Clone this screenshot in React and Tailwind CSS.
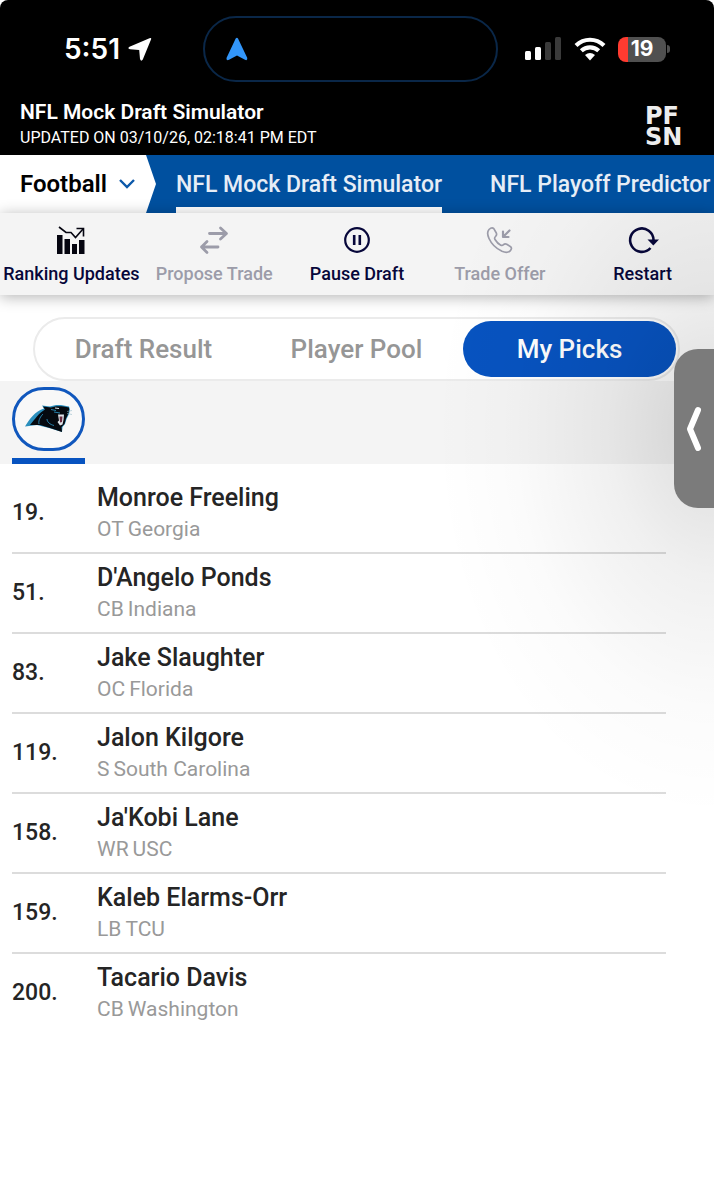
const PICKS = [
  { pick: 19, name: 'Monroe Freeling', pos: 'OT', school: 'Georgia' },
  { pick: 51, name: "D'Angelo Ponds", pos: 'CB', school: 'Indiana' },
  { pick: 83, name: 'Jake Slaughter', pos: 'OC', school: 'Florida' },
  { pick: 119, name: 'Jalon Kilgore', pos: 'S', school: 'South Carolina' },
  { pick: 158, name: "Ja'Kobi Lane", pos: 'WR', school: 'USC' },
  { pick: 159, name: 'Kaleb Elarms-Orr', pos: 'LB', school: 'TCU' },
  { pick: 200, name: 'Tacario Davis', pos: 'CB', school: 'Washington' },
];

function RankingIcon() {
  return (
    <svg width="30" height="30" viewBox="0 0 30 30" fill="none" stroke="#050510">
      <path d="M3 2l7 5.500h5l4.500 5L27 4" strokeWidth="1.600" />
      <path d="M20.500 3.500h7v8" strokeWidth="1.600" />
      <path d="M1 10h5.500v19H1zM8.500 14H14v15H8.500zM16 19h5v10h-5zM23 15h5.500v14H23z" fill="#050510" stroke="none" />
    </svg>
  );
}

function TradeIcon() {
  return (
    <svg width="30" height="30" viewBox="0 0 30 30" fill="none" stroke="currentColor" strokeWidth="2.800" strokeLinecap="round" strokeLinejoin="round">
      <path d="M10.500 8.500H27M21.500 3L27.500 8.500L21.500 14M19 22H2.500M8 16.500L2.500 22L8 27.500" />
    </svg>
  );
}

function PauseIcon() {
  return (
    <svg width="30" height="30" viewBox="0 0 30 30" fill="none" stroke="currentColor">
      <circle cx="15" cy="15" r="11.800" strokeWidth="2.200" />
      <path d="M12.200 10v10M17.800 10v10" strokeWidth="2.600" />
    </svg>
  );
}

function CallIcon() {
  return (
    <svg width="30" height="30" viewBox="0 0 30 30" fill="none" stroke="currentColor" strokeWidth="1.700" strokeLinejoin="round" strokeLinecap="round">
      <path d="M4 4.500C5.500 3 7.500 2.300 8.800 3.600L11.300 8C12 9.500 11.500 10.500 10.500 11.500C9.300 12.700 9.400 13.500 10 14.500C11.500 17 13.500 19 15.800 20.200C17 20.800 17.700 20.500 18.500 19.700C19.500 18.700 20.500 18.500 21.700 19.200L25.600 21.700C27 22.700 26.500 24.500 25.200 25.800C23 28 20 27.600 17 26.300C11 23.500 6.500 19 4 13.500C2.500 10.200 2 6.800 4 4.500Z" />
      <path d="M24.500 5.500L18.500 11.500M18 6.500V12H23.500" strokeWidth="2.200" />
    </svg>
  );
}

function RestartIcon() {
  return (
    <svg width="32" height="30" viewBox="0 0 32 30" fill="none" stroke="currentColor" strokeWidth="2.600">
      <path d="M23.500 23A11.700 11.700 0 1 1 26.500 15" />
      <path d="M20.500 14.500h11.500l-5.700 6z" fill="currentColor" stroke="none" />
    </svg>
  );
}

function PantherLogo() {
  return (
    <svg width="50" height="30" viewBox="0 0 50 30" aria-label="Carolina Panthers" role="img">
      <path d="M1 22.500C5 16 11 7 20 4.500L18 1.500L26 2.500C31 .2 38 .5 45 2.500L46 5.500L45 10L42.500 15L41 20L38.500 23L38 28L25 24L13 21Z" fill="#2b8fbd" />
      <path d="M6 21C11 15 15 9 21 5.500L19 2.500L27 3.500C33 1.500 38 2 45 3.500L45 7L44 10.500L42 14.500L40.500 20L37.500 23L38 28L26 24L16 21Z" fill="#05090f" />
      <path d="M15 20C14 16 17 12 19 10M23 15C23 18 26 20.500 30 21.500M27 5.500L32 6.500M30 8L36 9" fill="none" stroke="#2b8fbd" strokeWidth=".9" />
      <path d="M34 10.500L40 10.500L39.500 16L38.500 20.500L36 21.500L33.500 18L35 16.500Z" fill="#dfe4e9" />
      <path d="M35.500 12.500L38.500 12.500L38 18L36 18.500Z" fill="#6b2b40" />
      <path d="M31 4L35 4.500" stroke="#dce6ec" strokeWidth="1.200" />
      <path d="M43 7.500L48 6.500M43 9.500L48 10.500" stroke="#92b8ca" strokeWidth=".6" />
    </svg>
  );
}

const ACTIONS = [
  { label: 'Ranking Updates', icon: RankingIcon },
  { label: 'Propose Trade', icon: TradeIcon, disabled: true },
  { label: 'Pause Draft', icon: PauseIcon },
  { label: 'Trade Offer', icon: CallIcon, disabled: true },
  { label: 'Restart', icon: RestartIcon },
];

function StatusBar() {
  return (
    <div className="flex h-[98px] items-center justify-between pl-16 pr-11">
      <div className="flex items-center gap-2 font-['Inter'] text-[28px] font-semibold">
        5:51
        <svg width="24" height="24" viewBox="0 0 24 24" fill="#fff">
          <path d="M21.500 1.200Q23.800.2 23 2.500L14.800 22.500Q13.200 25 12 22L11.200 13L2 12.300Q-1 11.300 1.500 9.800Z" />
        </svg>
      </div>
      <div className="ml-6 flex h-[66px] w-[295px] items-center rounded-full border-2 border-[#0a2748] pl-5">
        <svg width="24" height="24" viewBox="0 0 24 24" fill="#3296fa">
          <path d="M10.700 1.500Q12 0 13 1.500L22.300 21Q22.500 24 20 22.800L12 18.500L4 22.800Q1 24 1.500 21Z" />
        </svg>
      </div>
      <div className="flex items-center gap-3">
        <svg width="37" height="24" viewBox="0 0 37 24">
          <rect x="0" y="14" width="6" height="9" rx="1.500" fill="#fff" />
          <rect x="10" y="10" width="6" height="13" rx="1.500" fill="#fff" />
          <rect x="20" y="5" width="6" height="18" rx="1.500" fill="#3a3a3a" />
          <rect x="30" y="0" width="6" height="23" rx="1.500" fill="#3a3a3a" />
        </svg>
        <svg width="32" height="24" viewBox="0 0 32 24" fill="none" stroke="#fff" strokeWidth="4.200">
          <path d="M2 8.500C10 .8 22 .8 30 8.500M7.300 13.800C12.300 9.200 19.700 9.200 24.700 13.800" />
          <path d="M11 18Q16 14 21 18L16 23.500Z" fill="#fff" stroke="none" />
        </svg>
        <div className="flex items-center gap-px">
          <div className="flex h-[25px] w-12 items-center justify-center rounded-lg bg-linear-to-r from-[#ff3b30] from-20% to-[#505050] to-20% font-['Inter'] text-[21px] font-bold">
            19
          </div>
          <div className="h-2 w-[3px] rounded-r-full bg-[#505050]" />
        </div>
      </div>
    </div>
  );
}

function Header() {
  return (
    <header className="rounded-t-lg bg-black text-white">
      <StatusBar />
      <div className="flex h-[57px] items-start justify-between pl-5 pr-[29px]">
        <div className="pt-[2px]">
          <h1 className="text-[21px] leading-6 font-semibold">NFL Mock Draft Simulator</h1>
          <p className="text-[16px] leading-7">UPDATED ON 03/10/26, 02:18:41 PM EDT</p>
        </div>
        <div className="w-10 pt-2 font-['DejaVu_Sans'] text-[24px] leading-[21px] font-bold break-all text-[#ededed]">
          PFSN
        </div>
      </div>
    </header>
  );
}

function SportNav() {
  return (
    <nav className="flex h-[58px] overflow-hidden bg-[#00509f] text-[23px] font-medium whitespace-nowrap">
      <button className="flex w-[156px] shrink-0 items-center gap-3 bg-white pl-5 text-[24px] font-semibold text-black [clip-path:polygon(0_0,146px_0,100%_50%,146px_100%,0_100%)]">
        Football
        <svg width="16" height="10" viewBox="0 0 16 10" fill="none" stroke="#0c59aa" strokeWidth="2.400">
          <path d="M1 1l7 7l7-7" />
        </svg>
      </button>
      <a href="#mock-draft" className="ml-5 shrink-0 border-b-[6px] border-white pt-[13px] text-[#e6edf6]">NFL Mock Draft Simulator</a>
      <a href="#playoffs" className="ml-12 shrink-0 pt-[13px] text-[#e6edf6]">NFL Playoff Predictor</a>
    </nav>
  );
}

function Toolbar() {
  return (
    <div className="grid h-[82px] grid-cols-5 bg-[#f4f4f4] shadow-[0_2px_14px_rgba(0,0,0,0.3)]">
      {ACTIONS.map(({ label, icon: Icon, disabled }) => (
        <button
          key={label}
          disabled={disabled}
          className="flex flex-col items-center gap-[7px] pt-3 text-[18px] leading-6 font-medium whitespace-nowrap text-[#07073a] disabled:text-[#9c9ca9]"
        >
          <Icon />
          {label}
        </button>
      ))}
    </div>
  );
}

function Tabs() {
  return (
    <div className="mt-[22px] mr-[34px] ml-[33px] grid h-16 grid-cols-3 rounded-full border-2 border-[#ebebeb] bg-white p-[2px] text-[26px] font-medium text-[#969696]">
      <button>Draft Result</button>
      <button>Player Pool</button>
      <button className="rounded-full bg-[#0753c0] text-white">My Picks</button>
    </div>
  );
}

function PickRow({ pick, name, pos, school }) {
  return (
    <li className="flex h-20 items-center border-b-2 border-[#dcdcdc] text-[#252525] last:border-transparent">
      <span className="w-[85px] text-[23px] font-medium">{pick}.</span>
      <div>
        <p className="text-[25px] leading-8 font-medium">{name}</p>
        <p className="flex gap-1 text-[21px] leading-[30px] text-[#999]">
          <span>{pos}</span>
          <span>{school}</span>
        </p>
      </div>
    </li>
  );
}

export default function App() {
  return (
    <div className="relative min-h-screen overflow-hidden bg-white font-['Roboto',sans-serif]">
      <Header />
      <SportNav />
      <div className="relative">
        <Toolbar />
        <Tabs />
        <div className="flex h-[83px] bg-[#f4f4f4] pl-3">
          <button className="flex flex-col justify-between border-b-[6px] border-[#0753c0] pt-[6px] pb-[7px]">
            <span className="flex h-16 w-[73px] items-center justify-center rounded-[32px] border-3 border-[#1057bd] bg-[#f8f8f8]">
              <PantherLogo />
            </span>
          </button>
        </div>
        <ul className="mr-12 ml-3 pt-[10px]">
          {PICKS.map((p) => (
            <PickRow key={p.pick} {...p} />
          ))}
        </ul>

        {/* soft shade behind the drawer handle */}
        <div className="pointer-events-none absolute top-0 right-0 h-[620px] w-[290px] bg-[radial-gradient(ellipse_280px_390px_at_100%_216px,rgba(0,0,0,0.14),rgba(0,0,0,0.06)_38%,rgba(0,0,0,0.015)_72%,transparent)]" />
        <button
          aria-label="Open drawer"
          className="absolute top-[136px] right-0 flex h-[159px] w-10 items-center justify-center rounded-l-[24px] bg-[#7b7b7b]"
        >
          <svg width="16" height="46" viewBox="0 0 16 46" fill="none" stroke="#fff" strokeWidth="6" strokeLinecap="round" strokeLinejoin="round">
            <path d="M12 4L4 23L12 42" />
          </svg>
        </button>
      </div>
    </div>
  );
}
